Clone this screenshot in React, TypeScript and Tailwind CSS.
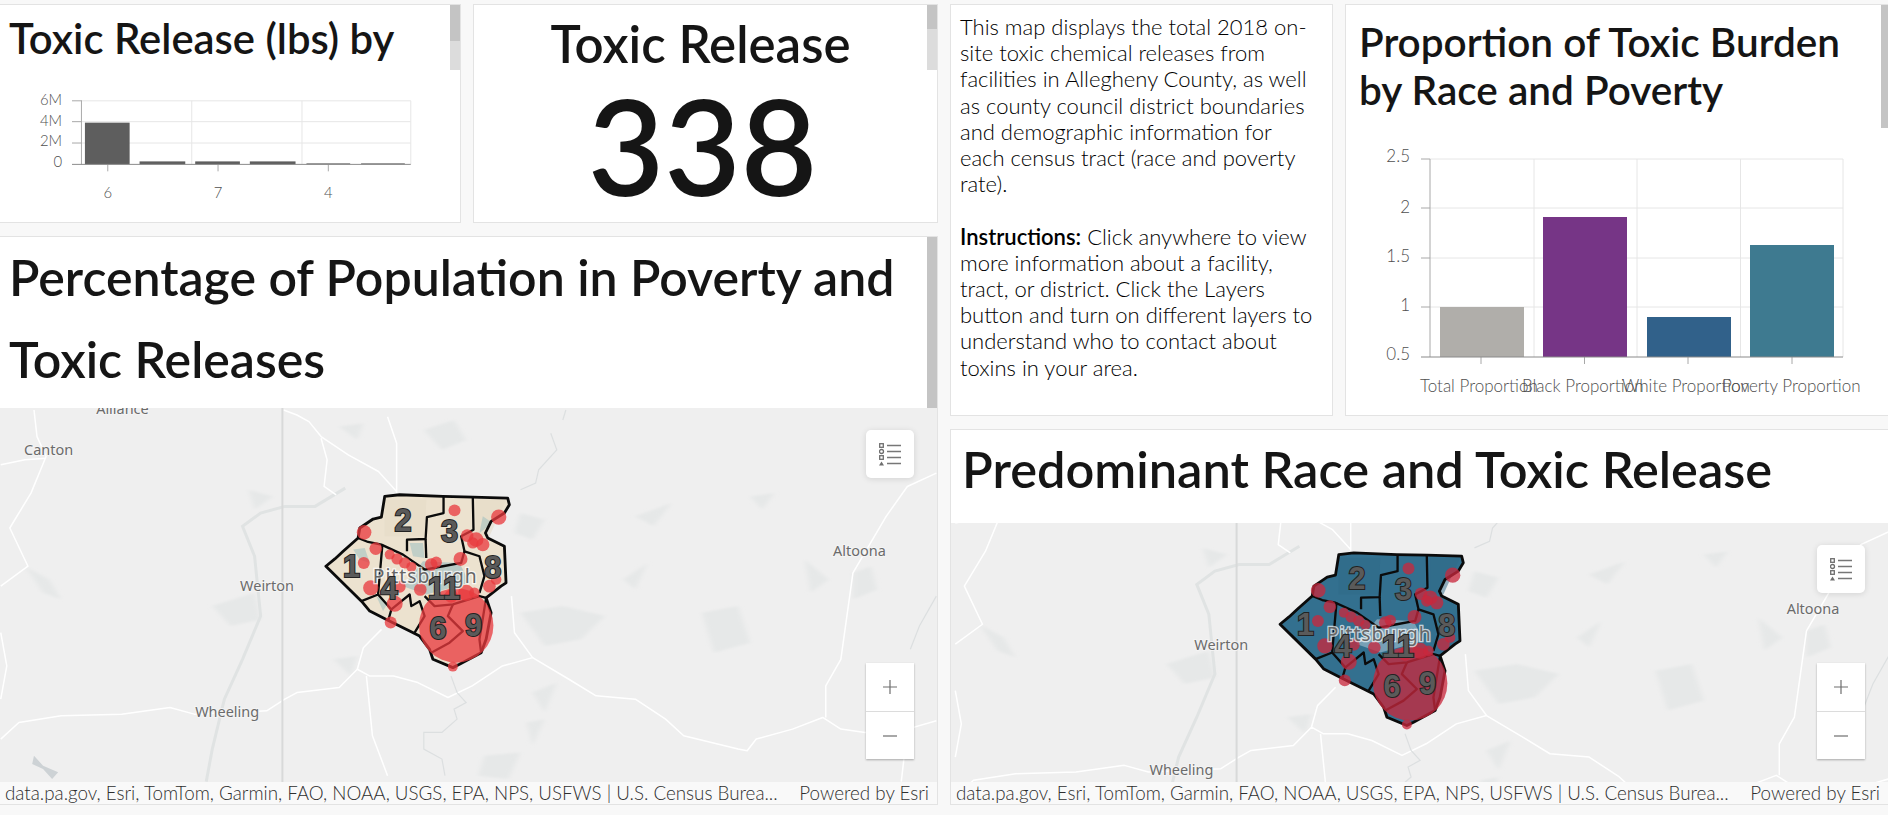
import React from "react";

const FONT = "font-['Lato','Noto_Sans',sans-serif]";

function Scroll({ track, thumb, full }: { track: string; thumb: string; full?: boolean }) {
  return (
    <div className={`w-[10px] shrink-0 ${full ? "bg-[#c4c4c4]" : ""}`}>
      {!full && (
        <div className={`${track} bg-[#dcdcdc]`}>
          <div className={`${thumb} bg-[#c4c4c4]`} />
        </div>
      )}
    </div>
  );
}

const roads = [
  "M468,30 L490,45 L510,65 L530,110 L575,165 L625,215 L655,275",
  "M530,115 L540,180 L535,260 L555,285",
  "M640,50 L655,130 L655,280",
  "M55,30 L60,110 L75,170 L50,280 L20,370 L15,385 L45,500 L0,560",
  "M0,195 L40,180 L75,175",
  "M0,1020 L30,970 L100,950 L200,945 L280,925 L320,945 L440,935 L470,900 L490,880 L560,865 L590,810 L610,830 L650,830 L690,850 L740,895 L780,860 L830,800 L880,775 L940,840 L985,890 L1050,900 L1100,960 L1130,1010 L1220,1050 L1235,1055 L1250,1020 L1310,990 L1360,955 L1390,990 L1430,1000 L1500,990 L1548,965",
  "M590,810 L600,745 L630,690",
  "M845,590 L850,700 L880,775",
  "M605,830 L615,1010 L640,1130",
  "M1548,220 L1500,260 L1465,350 L1410,520 L1400,650 L1390,780 L1365,860 L1365,955",
  "M1500,990 L1490,1148",
  "M0,700 L10,800 L0,900",
];
const thinRoads = [
  "M935,30 L930,60",
  "M910,100 L920,150 L890,210 L885,250 L860,270",
  "M745,830 L755,880 L770,910 L750,930 L755,960 L730,1000 L700,1000 L700,1050 L730,1080 L735,1130",
  "M1548,590 L1520,680 L1505,750",
];
const greys = [
  "M570,265 L520,320 L470,320 L430,340 L400,380 L420,470 L430,650 L400,780 L370,900 L350,1050 L340,1148",
];
const blobs = [
  "M700,90 L750,60 L770,120 L730,150 Z",
  "M560,80 L600,70 L590,120 Z",
  "M860,340 L900,360 L880,420 L850,400 Z",
  "M860,640 L930,620 L1000,650 L960,720 L900,740 Z",
  "M1160,640 L1220,620 L1240,730 L1180,760 Z",
  "M1050,350 L1110,310 L1080,380 Z",
  "M1030,540 L1070,490 L1050,570 Z",
  "M1330,480 L1370,540 L1340,580 Z",
  "M1410,520 L1440,500 L1450,570 L1410,600 Z",
  "M350,620 L420,580 L430,660 L380,680 Z",
  "M40,500 L80,540 L100,600 L70,580 Z",
  "M880,880 L920,850 L900,940 Z",
  "M870,970 L900,960 L880,1040 Z",
  "M800,1070 L860,1060 L840,1140 L790,1130 Z",
  "M550,780 L590,770 L580,830 Z",
  "M410,270 L450,290 L420,330 Z",
  "M1240,290 L1280,280 L1260,330 Z",
];

const outline =
  "M48,260 L75,238 L100,215 L145,175 L150,145 L190,118 L215,112 L225,50 L270,45 L400,50 L490,52 L595,55 L600,75 L585,100 L545,125 L528,160 L535,175 L585,200 L590,310 L575,320 L530,355 L545,400 L530,480 L515,520 L450,555 L430,565 L370,540 L360,510 L330,470 L300,455 L230,420 L180,395 L155,365 Z";
const districts = [
  "M402,50 L402,100 L352,112 L348,178 L292,180 L292,215",
  "M348,178 L350,235",
  "M490,52 L492,150 L455,170 L465,215 L510,230 L525,290 L510,340",
  "M145,175 L175,187 L215,195 L280,225 L345,270 L400,260 L455,250 L465,215",
  "M218,195 L205,345 L155,365",
  "M205,345 L245,390 L235,425",
  "M245,390 L300,345 L305,380 L330,365 L345,410 L315,460",
  "M345,350 L375,380 L430,375 L510,350 L530,355",
  "M430,375 L415,410 L460,455 L420,490 L365,520",
  "M530,355 L510,480 L515,520",
];
const circles: [number, number, number][] = [
  [163, 158, 22], [198, 207, 19], [162, 250, 18], [183, 325, 23], [243, 429, 18], [255, 373, 24],
  [240, 225, 15], [262, 238, 17], [285, 250, 17], [305, 262, 15], [270, 322, 18], [332, 330, 19],
  [365, 255, 19], [380, 248, 17], [435, 92, 18], [568, 112, 23], [473, 168, 19], [500, 180, 22],
  [520, 195, 20], [490, 190, 17], [453, 238, 21], [560, 300, 16], [540, 320, 19], [440, 438, 112],
  [470, 340, 24], [495, 340, 16], [430, 562, 15], [425, 350, 20],
];
const nums: [string, number, number][] = [
  ["1", 125, 293], ["2", 280, 153], ["3", 420, 186], ["4", 238, 360], ["11", 403, 360], ["8", 550, 296], ["6", 385, 478], ["9", 492, 471],
];

function County({ fill, patches, circleFill, spots, minorSpots, coreSpots }: { fill: string; patches: string; circleFill: string; spots: string; minorSpots: number; coreSpots: number }) {
  return (
    <g transform="translate(310 480) scale(0.3333)">
      <path d={outline} fill={fill} />
      <path d="M225,60 L350,60 L345,170 L225,170 Z M500,60 L590,60 L540,170 L500,170 Z" fill={patches} opacity="0.5" />
      <path d="M130,210 L165,205 L180,250 L150,240 Z M200,350 L235,370 L220,395 Z M300,190 L340,190 L345,235 L310,230 Z M520,110 L550,130 L510,160 Z" fill={spots} opacity={minorSpots} />
      <path d="M340,245 L450,250 L480,310 L350,345 L280,320 Z" fill={spots} opacity={coreSpots} />
      <path d={outline} fill="none" stroke="#0b0b0b" strokeWidth="8.5" strokeLinejoin="round" />
      {districts.map((d, i) => (
        <path key={i} d={d} fill="none" stroke="#0b0b0b" strokeWidth="7" strokeLinejoin="round" />
      ))}
      {circles.map(([x, y, r], i) => (
        <circle key={i} cx={x} cy={y} r={r} fill={circleFill} fillOpacity="0.76" />
      ))}
      <text x="347" y="310" textAnchor="middle" fontSize="58" letterSpacing="3" fontFamily="'Noto Sans',sans-serif" fill="#666666" stroke="#ffffff" strokeOpacity="0.7" strokeWidth="8" paintOrder="stroke">
        Pittsburgh
      </text>
      {nums.map(([t, x, y]) => (
        <text key={t} x={x} y={y} textAnchor="middle" fontSize="92" fontWeight="700" fontFamily="'Liberation Sans',sans-serif" fill="#5a5a5a" stroke="#222222" strokeWidth="6" paintOrder="stroke">
          {t}
        </text>
      ))}
    </g>
  );
}

function MapView({ top, left, height, width, right }: { top: number; left: number; height: number; width: number; right?: boolean }) {
  const labels: [string, number, number][] = [
    ["Alliance", 122, 414],
    ["Canton", 48, 455],
    ["Weirton", 267, 592],
    ["Wheeling", 227, 718],
    ["Altoona", 861, 556],
  ];
  return (
    <svg viewBox={`${left} ${top} ${width} ${height}`} className="block w-full h-full bg-[#efefef]">
      <defs>
        <filter id={right ? "soft2" : "soft1"}>
          <feGaussianBlur stdDeviation="4" />
        </filter>
      </defs>
      <g transform="translate(0 400) scale(0.606 0.3333)">
        <g filter={right ? "url(#soft2)" : "url(#soft1)"}>
          {blobs.map((d, i) => (
            <path key={i} d={d} fill="#e6e8e8" />
          ))}
        </g>
        <path d="M55,1070 L70,1100 L95,1120 L85,1140 L70,1110 L52,1095 Z" fill="#cdd2d5" />
        {greys.map((d, i) => (
          <path key={i} d={d} fill="none" stroke="#e0e3e3" strokeWidth="3" vectorEffect="non-scaling-stroke" />
        ))}
        {roads.map((d, i) => (
          <path key={i} d={d} fill="none" stroke="#ffffff" strokeWidth="1.5" strokeLinejoin="round" vectorEffect="non-scaling-stroke" />
        ))}
        {thinRoads.map((d, i) => (
          <path key={i} d={d} fill="none" stroke="#dcdfe0" strokeWidth="1.2" vectorEffect="non-scaling-stroke" />
        ))}
        <path d="M466,0 L466,1400" stroke="#d8d9d9" strokeWidth="2" vectorEffect="non-scaling-stroke" />
      </g>
      {labels.map(([t, x, y]) => (
        <text key={t} x={x} y={y} textAnchor="middle" fontSize="14.5" fontFamily="'Noto Sans',sans-serif" fill="#6b6b6b" stroke="#f4f4f4" strokeWidth="2" paintOrder="stroke">
          {t}
        </text>
      ))}
      {right ? (
        <County fill="#33708f" patches="#2f6a88" circleFill="#c9273d" spots="#dfe9f0" minorSpots={0} coreSpots={0.4} />
      ) : (
        <County fill="#ece2cf" patches="#e3dac6" circleFill="#e83a3e" spots="#8fb7bd" minorSpots={0.45} coreSpots={0.55} />
      )}
    </svg>
  );
}

function MapButton({ children, className }: { children: React.ReactNode; className?: string }) {
  return <div className={`flex items-center justify-center bg-white w-[48px] ${className ?? ""}`}>{children}</div>;
}

function LegendIcon() {
  return (
    <svg width="23" height="23" viewBox="0 0 23 23">
      <g fill="none" stroke="#6e6e6e" strokeWidth="1.3">
        <rect x="0.7" y="0.7" width="3.6" height="3.6" />
        <circle cx="2.5" cy="8.5" r="2" />
        <rect x="0.7" y="12.7" width="3.6" height="3.6" />
      </g>
      <path d="M2.5,18.5 L5,22.5 L0,22.5 Z" fill="#6e6e6e" />
      <g stroke="#777777" strokeWidth="1.3">
        <path d="M8,2.5 L22,2.5 M8,8.5 L22,8.5 M8,14.5 L22,14.5 M8,20.5 L22,20.5" />
      </g>
    </svg>
  );
}

function MapArea(props: { top: number; left: number; height: number; width: number; right?: boolean }) {
  return (
    <div className="relative flex-1 min-h-0 overflow-hidden">
      <MapView {...props} />
      <MapButton className="absolute top-[22px] right-[23px] h-[48px] rounded-[5px] shadow-[0_1px_6px_rgba(0,0,0,0.12)]">
        <LegendIcon />
      </MapButton>
      <div className="absolute bottom-[23px] right-[23px] w-[48px] shadow-[0_1px_2px_rgba(0,0,0,0.3)]">
        <MapButton className="h-[49px] border-b border-[#dcdcdc]">
          <svg width="16" height="16" viewBox="0 0 16 16"><path d="M8,1 V15 M1,8 H15" stroke="#6e6e6e" strokeWidth="1.2" /></svg>
        </MapButton>
        <MapButton className="h-[47px]">
          <svg width="16" height="16" viewBox="0 0 16 16"><path d="M1,8 H15" stroke="#6e6e6e" strokeWidth="1.2" /></svg>
        </MapButton>
      </div>
    </div>
  );
}

function Attribution() {
  return (
    <div className="flex h-[22px] shrink-0 items-center justify-between bg-[#f9f9f9] pl-[5px] pr-[8px] text-[18.8px] font-light text-[#2f2f2f] whitespace-nowrap">
      <span>data.pa.gov, Esri, TomTom, Garmin, FAO, NOAA, USGS, EPA, NPS, USFWS | U.S. Census Burea...</span>
      <span>Powered by Esri</span>
    </div>
  );
}

function BarChart1() {
  const bars: [number, number, number][] = [[84, 129, 123], [139, 185, 162], [195, 240, 162], [250, 296, 162], [307, 351, 164], [362, 406, 164]];
  return (
    <svg width="450" height="153" viewBox="0 70 450 153" className="block">
      <g stroke="#e6e6e6" strokeWidth="1">
        <path d="M80,101 H412 M80,122 H412 M80,143.5 H412 M191.5,101 V165 M302.5,101 V165 M412,101 V165" />
      </g>
      <path d="M71,101 H81 M71,122 H81 M71,143.5 H81 M80.5,101 V165 M107,165 V172 M218,165 V172 M329,165 V172" stroke="#a8a8a8" fill="none" />
      {bars.map(([a, b, t], i) => (
        <rect key={i} x={a} y={t} width={b - a} height={165 - t} fill="#5e5e5e" />
      ))}
      <path d="M71,165 H412" stroke="#8a8a8a" />
      <g fontSize="15" fill="#4f4f4f" fontWeight="300" fontFamily="Lato,sans-serif" textAnchor="end">
        <text x="61" y="105">6M</text>
        <text x="61" y="126">4M</text>
        <text x="61" y="147">2M</text>
        <text x="61" y="168">0</text>
      </g>
      <g fontSize="15" fill="#4f4f4f" fontWeight="300" fontFamily="Lato,sans-serif" textAnchor="middle">
        <text x="107" y="199">6</text>
        <text x="218" y="199">7</text>
        <text x="329" y="199">4</text>
      </g>
    </svg>
  );
}

function BarChart2() {
  const bars: [number, number, number, string][] = [
    [1440, 1524, 307, "#b0aeaa"],
    [1543, 1627, 217, "#763586"],
    [1647, 1731, 317, "#31618a"],
    [1750, 1834, 245, "#3e7a90"],
  ];
  return (
    <svg width="535" height="288" viewBox="1346 128 535 288" className="block">
      <g stroke="#e6e6e6">
        <path d="M1430,159 H1843 M1430,208 H1843 M1430,258 H1843 M1430,307 H1843 M1534,159 V357 M1637,159 V357 M1740.5,159 V357 M1843,159 V357" />
      </g>
      <path d="M1421,159 H1430 M1421,208 H1430 M1421,258 H1430 M1421,307 H1430 M1430,159 V357 M1481,357 V364 M1584.5,357 V364 M1688,357 V364 M1792,357 V364" stroke="#a8a8a8" fill="none" />
      {bars.map(([a, b, t, c], i) => (
        <rect key={i} x={a} y={t} width={b - a} height={357 - t} fill={c} />
      ))}
      <path d="M1421,357 H1843" stroke="#8a8a8a" />
      <g fontSize="17" fill="#4f4f4f" fontWeight="300" fontFamily="Lato,sans-serif" textAnchor="end">
        <text x="1410" y="162">2.5</text>
        <text x="1410" y="213">2</text>
        <text x="1410" y="262">1.5</text>
        <text x="1410" y="311">1</text>
        <text x="1410" y="360">0.5</text>
      </g>
      <g fontSize="17" fill="#4f4f4f" fontWeight="300" fontFamily="Lato,sans-serif">
        <text x="1420" y="392">Total Proportion</text>
        <text x="1522" y="392">Black Proportion</text>
        <text x="1622" y="392">White Proportion</text>
        <text x="1722" y="392">Poverty Proportion</text>
      </g>
    </svg>
  );
}

const card = "bg-white border border-[#e3e3e3]";

export default function App() {
  return (
    <div className={`${FONT} h-[815px] w-[1888px] overflow-hidden bg-[#f8f8f8] pt-[4px] text-[#151515] flex`}>
      <div className="w-[938px] shrink-0 flex flex-col">
        <div className="flex h-[219px] shrink-0 gap-[12px]">
          <div className={`${card} w-[461px] border-l-0 flex flex-col overflow-hidden`}>
            <div className="flex h-[65px] shrink-0">
              <div className="flex-1 pl-[9px] pt-[11px] text-[41.8px] leading-[44px] font-semibold whitespace-nowrap overflow-hidden">Toxic Release (lbs) by</div>
              <Scroll track="h-[65px]" thumb="h-[36px]" />
            </div>
            <BarChart1 />
          </div>
          <div className={`${card} flex-1 flex flex-col overflow-hidden relative`}>
            <div className="flex h-[65px] shrink-0">
              <div className="flex-1 text-center pt-[14px] text-[51px] leading-[50px] font-semibold">Toxic Release</div>
              <Scroll track="h-[65px]" thumb="h-[24px]" />
            </div>
            <div className="text-center text-[132px] leading-[130px] font-semibold pr-[6px] mt-[10px]">338</div>
          </div>
        </div>
        <div className={`${card} mt-[13px] flex-1 flex flex-col overflow-hidden mb-[10px] border-l-0`}>
          <div className="flex h-[171px] shrink-0">
            <div className="flex-1 pl-[9px] -mt-[1px] text-[50px] leading-[82px] font-semibold whitespace-nowrap overflow-hidden">Percentage of Population in Poverty and<br />Toxic Releases</div>
            <Scroll track="" thumb="" full />
          </div>
          <MapArea top={408} left={0} width={938} height={375} />
          <Attribution />
        </div>
      </div>
      <div className="ml-[12px] flex-1 flex flex-col min-w-0">
        <div className="flex h-[412px] shrink-0 gap-[12px]">
          <div className={`${card} w-[383px] shrink-0 pl-[9px] pr-[17px] pt-[9px] text-[22px] leading-[26.2px] font-light text-black`}>
            <p>This map displays the total 2018 on-site toxic chemical releases from facilities in Allegheny County, as well as county council district boundaries and demographic information for each census tract (race and poverty rate).</p>
            <p className="mt-[26.2px]"><span className="font-semibold">Instructions:</span> Click anywhere to view more information about a facility, tract, or district. Click the Layers button and turn on different layers to understand who to contact about toxins in your area.</p>
          </div>
          <div className={`${card} flex-1 border-r-0 overflow-hidden`}>
            <div className="flex h-[123px]">
              <div className="flex-1 pl-[13px] pt-[13px] text-[40.5px] leading-[48px] font-semibold whitespace-nowrap">Proportion of Toxic Burden<br />by Race and Poverty</div>
              <div className="w-[7px] shrink-0 bg-[#c4c4c4]" />
            </div>
            <BarChart2 />
          </div>
        </div>
        <div className={`${card} mt-[13px] flex-1 flex flex-col overflow-hidden mb-[10px] border-r-0`}>
          <div className="h-[93px] shrink-0 pl-[11px] pt-[4px] text-[50.5px] leading-[70px] font-semibold whitespace-nowrap">Predominant Race and Toxic Release</div>
          <MapArea top={465} left={-3} width={938} height={260} right />
          <Attribution />
        </div>
      </div>
    </div>
  );
}
